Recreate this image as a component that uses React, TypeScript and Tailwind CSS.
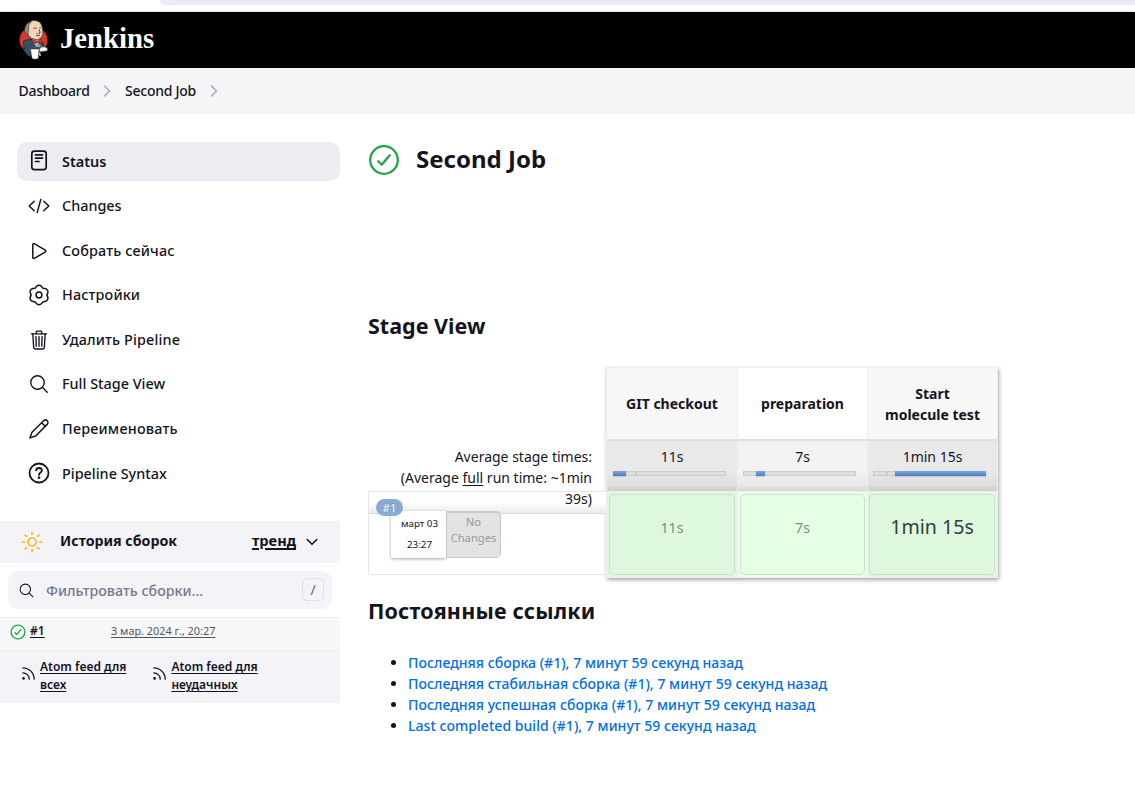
import React from "react";
import { Rss } from "lucide-react";
import { IoTrashOutline, IoSearchOutline } from "react-icons/io5";

function Logo() {
  return (
    <svg width="30" height="42" viewBox="0 0 30 42" className="shrink-0">
      <ellipse cx="14.5" cy="21" rx="14" ry="13.2" fill="#d33833" />
      <path d="M4.500 22 L11 20 L20 22 L24.500 24 L25 31 L18 37 L9 37 L7 34 Q4 32 5 29 Z" fill="#335061" stroke="#1c2b33" strokeWidth="0.8" />
      <path d="M13 20 L20 21 L19 27 L15 25 Z" fill="#f0f0f0" />
      <path d="M7.500 13 Q6.500 4 13.500 1.600 Q21.500 .6 23.300 8 L24 15 Q23 20 18 21 Q11.500 20 9 16 Z" fill="#f0d6b7" stroke="#3a3430" strokeWidth="0.8" />
      <path d="M6 14 Q4.500 7 9 4 L12 2.600 Q8.800 6.500 9.500 10 L9 16 Z" fill="#8f8b87" stroke="#2b2b2b" strokeWidth="0.600" />
      <path d="M14.500 9.500 q1.700 -1.200 3 0 M20.300 9 q1.300 -.8 2 .3 M20 10.500 l1.200 3 -1.400 .4 M17 16.500 q2 1 4.200 -.5" fill="none" stroke="#403730" strokeWidth="0.9" />
      <path d="M17 14.700 l3.800 0" stroke="#9b7c64" strokeWidth="1" />
      <path d="M13.500 20.500 L18 22.200 L22.300 20.300 L22.500 24.500 L18.700 23.700 L14.700 25 Z" fill="#d33833" stroke="#761e1c" strokeWidth="0.600" />
      <path d="M16 26 l3 -1 3 1 -1 2 -4 0z" fill="#8fa5b1" />
      <path d="M11.500 30 L20 30 L19.300 39.500 Q16 41 13 39.500 Z" fill="#fff" stroke="#343434" strokeWidth="0.5" />
      <path d="M20.500 30 q2 -3 4.500 -2 q3.500 -.2 3.500 2.500 q0 2 -3 1.800 l-5 .2z" fill="#f7f7f7" stroke="#555" strokeWidth="0.600" />
      <path d="M20.500 34 l.8 3" stroke="#ddd" strokeWidth="1.300" />
    </svg>
  );
}

function Line({ children, w = 1.6 }: { children: React.ReactNode; w?: number }) {
  return (
    <svg width="22" height="22" viewBox="0 0 22 22" fill="none" stroke="currentColor" strokeWidth={w} strokeLinecap="round" strokeLinejoin="round" className="shrink-0">
      {children}
    </svg>
  );
}

const point = (deg: number, r: number) => {
  const a = (deg * Math.PI) / 180;
  return `${(11 + r * Math.cos(a)).toFixed(2)} ${(11 + r * Math.sin(a)).toFixed(2)}`;
};
const gearPath =
  `M${point(-107, 9)}` +
  [0, 1, 2, 3, 4, 5]
    .map((i) => `A3.5 3.5 0 0 1 ${point(-73 + i * 60, 9)}A3.2 3.2 0 0 0 ${point(-47 + i * 60, 9)}`)
    .join("") +
  "Z";

const GearIcon = () => (
  <Line w={1.5}>
    <path d={gearPath} />
    <circle cx="11" cy="11" r="2.900" />
  </Line>
);
const StatusIcon = () => (
  <Line w={1.7}>
    <rect x="3.800" y="1.100" width="14.400" height="18.600" rx="2.600" />
    <path d="M7.500 4.900h7M7.500 8.200h7M7.500 11.500h3.500" />
  </Line>
);
const CodeIcon = () => (
  <Line w={1.500}>
    <path d="M6.200 6.200L1.200 11l5 4.800M15.800 6.200l5 4.800-5 4.800M12.800 4.400L9.200 17.600" />
  </Line>
);
const PlayIcon = () => (
  <Line w={1.500}>
    <path d="M4.800 4.600v12.800c0 .9.8 1.300 1.500.9l10.900-6.200c.8-.5.8-1.500 0-2L6.300 3.700c-.7-.4-1.500 0-1.500.9z" />
  </Line>
);
const PencilIcon = () => (
  <Line w={1.500}>
    <path d="M1.900 19.900L4 14.300 15.600 2.800a2.500 2.500 0 0 1 3.600 3.600L7.700 18 1.900 19.900zM13.700 4.800l3.600 3.600" />
  </Line>
);
const HelpIcon = () => (
  <Line w={1.800}>
    <circle cx="11" cy="11" r="9.500" />
    <path d="M8.100 8.300c.2-1.500 1.300-2.300 2.900-2.300 1.700 0 2.900 1 2.900 2.500 0 2.200-2.900 2-2.900 4.300" />
    <circle cx="11" cy="15.700" r=".5" fill="currentColor" />
  </Line>
);

const menu = [
  { label: "Status", icon: <StatusIcon />, active: true },
  { label: "Changes", icon: <CodeIcon /> },
  { label: "Собрать сейчас", icon: <PlayIcon />, tracking: "tracking-[0.15px]" },
  { label: "Настройки", icon: <GearIcon />, tracking: "tracking-[0.13px]" },
  { label: "Удалить Pipeline", icon: <IoTrashOutline size={22} />, tracking: "tracking-[0.13px]" },
  { label: "Full Stage View", icon: <IoSearchOutline size={22} /> },
  { label: "Переименовать", icon: <PencilIcon />, tracking: "tracking-[0.2px]" },
  { label: "Pipeline Syntax", icon: <HelpIcon /> },
];

function Check({ size, w }: { size: number; w: number }) {
  return (
    <svg width={size} height={size} viewBox="0 0 32 32" fill="none" stroke="#1ea64b" strokeWidth={w} strokeLinecap="round" strokeLinejoin="round" className="shrink-0">
      <circle cx="16" cy="16" r="13.800" />
      <path d="M10.200 17.300l3.500 3.500 8-9.500" />
    </svg>
  );
}

function Crumb({ children }: { children: string }) {
  return (
    <>
      <span className="pb-px">{children}</span>
      <svg width="8" height="12" viewBox="0 0 8 12" fill="none" stroke="#a9a9b8" strokeWidth="1.600" strokeLinecap="round" strokeLinejoin="round" className="mr-[14px] ml-[13.500px]">
        <path d="M1.500 1l5 5-5 5" />
      </svg>
    </>
  );
}

const stages = [
  { name: "GIT checkout", avg: "11s", time: "11s", left: 0, width: 13, tick: 21, odd: true },
  { name: "preparation", avg: "7s", time: "7s", left: 13, width: 9, tick: 12, odd: false },
  { name: "Start molecule test", avg: "1min 15s", time: "1min 15s", left: 22, width: 91, tick: 12, odd: true, big: true },
];

const links = [
  "Последняя сборка (#1), 7 минут 59 секунд назад",
  "Последняя стабильная сборка (#1), 7 минут 59 секунд назад",
  "Последняя успешная сборка (#1), 7 минут 59 секунд назад",
  "Last completed build (#1), 7 минут 59 секунд назад",
];

function Sidebar() {
  return (
    <aside className="w-[340px] shrink-0 pt-[27.830px]">
      <nav className="ml-[17px] flex flex-col gap-[5.600px]">
        {menu.map((m) => (
          <a key={m.label} className={`flex h-[39px] items-center gap-3 rounded-[10px] pl-[11px] text-[14.400px] ${m.tracking ?? ""} ${m.active ? "bg-[#ecedf3] font-semibold" : "font-medium"}`}>
            {m.icon}
            <span>{m.label}</span>
          </a>
        ))}
      </nav>

      <div className="mt-[27.970px] flex h-[42px] items-center bg-[#f3f3f8] pr-[22px] pl-[21px] text-[14.200px] font-bold">
        <svg width="22" height="22" viewBox="0 0 22 22" fill="none" stroke="#fdb830" strokeWidth="1.700" strokeLinecap="round">
          <circle cx="11" cy="11" r="4" />
          <path d="M11 1.300v2M11 18.700v2M1.300 11h2M18.700 11h2M4.100 4.100l1.300 1.300M16.600 16.600l1.300 1.300M4.100 17.900l1.300-1.300M16.600 5.400l1.300-1.300" />
        </svg>
        <span className="ml-[17px] flex-1 pb-[2px]">История сборок</span>
        <a className="pb-[2px] text-[14.600px] underline decoration-[1.500px] underline-offset-2">тренд</a>
        <svg width="12" height="8" viewBox="0 0 12 8" fill="none" stroke="currentColor" strokeWidth="1.600" strokeLinecap="round" strokeLinejoin="round" className="ml-[10px]">
          <path d="M1.200 1.500L6 6.300l4.800-4.800" />
        </svg>
      </div>

      <div className="mx-2 mt-2 flex h-[38px] items-center rounded-[10px] bg-[#f3f3f8] pr-2 pl-[10px]">
        <IoSearchOutline size={17} className="mt-px" />
        <span className="ml-[11px] flex-1 pt-px text-[14.250px] font-medium text-[#77778f]">Фильтровать сборки...</span>
        <kbd className="flex h-[23px] w-[22px] items-center justify-center rounded-[5px] border border-[#dfdfe9] font-['Noto_Sans',sans-serif] text-[14px] text-[#66667a]">/</kbd>
      </div>

      <div className="mt-2 flex h-8 items-center border-t border-[#f1f1f1] bg-[#f8f8f8] pb-[4px] text-[12px]">
        <span className="ml-[10px] flex pt-[2px]"><Check size={16} w={2.800} /></span>
        <a className="ml-1 w-[81px] font-semibold"><span className="underline underline-offset-2">#1</span></a>
        <a className="text-[10.900px] text-[#555560] underline underline-offset-2">3 мар. 2024 г., 20:27</a>
      </div>

      <div className="flex h-[54px] items-center bg-[#f3f3f8] pl-5 text-[12px] leading-[18px] font-semibold">
        <Rss size={17} strokeWidth={1.800} className="-mt-1 shrink-0" />
        <a className="ml-[3px] w-[111px] underline underline-offset-2">Atom feed для<br />всех</a>
        <Rss size={17} strokeWidth={1.800} className="-mt-1 shrink-0" />
        <a className="ml-[3.400px] w-[110px] underline underline-offset-2">Atom feed для<br />неудачных</a>
      </div>
    </aside>
  );
}

function StageView() {
  return (
    <section className="mt-[25px] flex">
      <div className="flex w-[238px] flex-col">
        <div className="h-[124px] pt-[79px] pr-[14px] text-right leading-[21px]">
          <div className="relative z-10">
            Average stage times:
            <br />
            (Average <span className="underline underline-offset-2">full</span> run time: ~1min
            <br />
            39s)
          </div>
        </div>
        <div className="relative h-[84px] border border-r-0 border-[#e6e6e6]">
          <div className="h-[22px] border-b border-[#dcdcdc] bg-[linear-gradient(to_bottom,#ffffff_45%,#ececec)]" />
          <div className="relative -mt-[3px] ml-[22px] flex h-[47px] w-[110px]">
            <div className="flex w-[55px] flex-col items-center bg-white pt-[2px] pl-[2px] text-[9.800px] leading-[21px] shadow-[0_1px_3px_rgba(0,0,0,0.35)]">
              <span>март 03</span>
              <span>23:27</span>
            </div>
            <div className="w-[55px] rounded-r-[5px] border border-t-[2px] border-[#c8c8c8] bg-[#e3e3e3] pt-px text-center text-[11.200px] leading-4 text-[#999]">
              No Changes
            </div>
          </div>
          <span className="absolute top-[7px] left-[7px] flex h-[17px] w-[27px] items-center justify-center rounded-full bg-[#88abd1] text-[11.500px] text-white [text-shadow:0_-1px_0_rgba(0,0,0,0.25)]">#1</span>
        </div>
      </div>

      <div className="grid h-[211px] w-[392px] grid-cols-[130px_129px_129px] gap-px border border-[#eeeef0] bg-[#eeeef0] shadow-[1px_2px_4px_rgba(0,0,0,0.350)]">
        {stages.map((s) => (
          <div key={s.name} className="flex flex-col text-center">
            <div className={`flex h-[71px] items-center justify-center px-4 leading-[21px] font-bold ${s.odd ? "bg-[#f7f7f7]" : "bg-white"}`}>{s.name}</div>
            <div className={`h-[52px] border-t-2 border-[#e0e0e0] pt-[5px] ${s.odd ? "bg-[linear-gradient(to_bottom,#e9e9e9_60%,#dedede_88%,#cdcdcd)]" : "bg-[linear-gradient(to_bottom,#f2f2f2_60%,#e8e8e8_88%,#d6d6d6)]"}`}>
              <div className="leading-[21px]">{s.avg}</div>
              <div className={`relative mt-[4px] h-[5px] w-[113px] border border-[#cbcbcb] bg-[#dedede] ${s.left === 0 ? "ml-[6px]" : "ml-[5px]"}`}>
                <span className="absolute -top-px h-[5px] w-[2px] bg-[#cbcbcb]" style={{ left: s.tick }} />
                <span className="absolute -top-px h-[5px] bg-[linear-gradient(to_bottom,#7fa8da,#4a7ac8)] shadow-[0_1px_2px_rgba(0,0,0,0.150)]" style={{ left: s.left - 1, width: s.width }} />
              </div>
            </div>
            <div className={`flex flex-1 border-t border-[#efefef] p-[2px] ${s.odd ? "bg-[#e4f4e4]" : "bg-[#eaffea]"} ${s.big ? "pl-px" : "pl-[2px]"}`}>
              <div className={`flex flex-1 items-center justify-center rounded-[5px] border border-[#d0dcd2] ${s.odd ? "bg-[#ddf8dd]" : "bg-[#e4ffe3]"} ${s.big ? "pb-4 text-[19.600px] text-[#30403a]" : "pb-3.5 text-[14.200px] text-[#7d8f80]"}`}>{s.time}</div>
            </div>
          </div>
        ))}
      </div>
    </section>
  );
}

export default function App() {
  return (
    <div className="min-h-[789px] w-full overflow-hidden bg-white font-['Noto_Sans',sans-serif] text-[14px] text-[#14141f]">
      <div className="flex h-3 flex-col justify-between border-b border-[#dddde2] pl-[160px]">
        <div className="h-[5px] rounded-bl-[10px] bg-[#e9ecf8]" />
      </div>
      <header className="flex h-14 items-center bg-black pl-[19px]">
        <Logo />
        <span className="ml-[11px] pb-1 font-['Liberation_Serif',serif] text-[28.700px] leading-none font-bold text-white">Jenkins</span>
      </header>
      <div className="flex h-[46px] items-center bg-[#f5f5f8] pl-[18.500px] text-[14px] font-medium tracking-[-0.260px]">
        <Crumb>Dashboard</Crumb>
        <Crumb>Second Job</Crumb>
      </div>
      <div className="flex">
        <Sidebar />
        <main className="flex-1 pt-[30px] pl-7">
          <div className="flex h-8 items-center gap-4">
            <Check size={32} w={2.300} />
            <h1 className="pb-[2px] text-[24px] leading-8 font-bold">Second Job</h1>
          </div>
          <h2 className="mt-[134px] text-[21.500px] leading-8 font-bold">Stage View</h2>
          <StageView />
          <h2 className="mt-[17px] text-[21.500px] leading-8 font-bold tracking-[0.180px]">Постоянные ссылки</h2>
          <ul className="mt-[25px] list-disc pl-10 leading-[21px]">
            {links.map((l) => (
              <li key={l}><a className="font-medium tracking-[0.040px] text-[#006ee6]">{l}</a></li>
            ))}
          </ul>
        </main>
      </div>
    </div>
  );
}
